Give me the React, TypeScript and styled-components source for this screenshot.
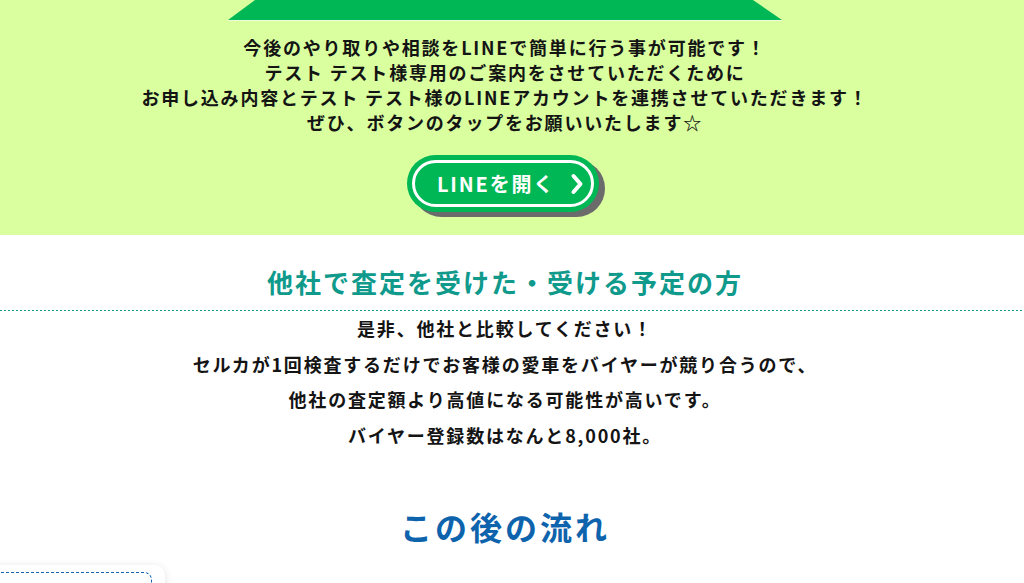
import React from 'react';
import styled, { createGlobalStyle } from 'styled-components';

const GlobalStyle = createGlobalStyle`
  html, body {
    margin: 0;
    padding: 0;
    background: #ffffff;
    overflow: hidden;
  }
  body {
    font-family: 'Noto Sans CJK JP', 'Noto Sans', sans-serif;
    color: #151515;
  }
  * { box-sizing: border-box; }
`;

// Content column is a bit narrower than the window (centered at ~505px)
const GUTTER = 14;

// Styled Components
const Page = styled.div`
  width: 1024px;
  overflow: hidden;
`;

const LineSection = styled.section`
  background: #d9ff9f;
  display: flex;
  flex-direction: column;
  align-items: center;
  padding: 0 ${GUTTER}px 23px 0;
`;

const RibbonWrap = styled.div`
  width: 554px;
  border-bottom: 1px solid #eefbdc;
`;

const Ribbon = styled.div`
  height: 20px;
  background: #00b755;
  clip-path: polygon(27px 0, calc(100% - 29px) 0, 100% 100%, 0 100%);
`;

const Message = styled.p`
  margin: 14px 0 0;
  font-size: 18px;
  font-weight: 700;
  line-height: 25px;
  letter-spacing: 0.1em;
  text-align: center;
  color: #141414;
`;

const ButtonRow = styled.div`
  display: flex;
  justify-content: center;
  width: 100%;
  padding-right: 4px;
  margin-top: 20px;
`;

const LineButton = styled.button`
  width: 192px;
  height: 57px;
  padding: 5px;
  border: none;
  border-radius: 29px;
  background: #00b755;
  box-shadow: 6px 5px 0 #6b6b6b;
  cursor: pointer;
`;

const ButtonInner = styled.span`
  display: flex;
  align-items: center;
  height: 100%;
  padding: 0 6px 0 22px;
  border: 3px solid #ffffff;
  border-radius: 24px;
  color: #ffffff;
  font-family: 'Noto Sans CJK JP', sans-serif;
  font-size: 20px;
  font-weight: 700;
  letter-spacing: 0.09em;
`;

const ButtonLabel = styled.span`
  flex: 1;
  text-align: left;
`;

const CompareSection = styled.section`
  display: flex;
  flex-direction: column;
  align-items: center;
  padding: 29px ${GUTTER}px 0 0;
`;

const SectionTitle = styled.h2<{ $color: string; $size: number; $spacing: number }>`
  margin: 0;
  font-size: ${props => props.$size}px;
  line-height: 1.4;
  font-weight: 700;
  letter-spacing: ${props => props.$spacing}px;
  color: ${props => props.$color};
  text-align: center;
`;

const DottedRule = styled.div`
  align-self: flex-start;
  width: calc(100% + ${GUTTER}px);
  height: 1px;
  margin-top: 10px;
  background-image: repeating-linear-gradient(
    to right,
    #109a8c 0,
    #109a8c 2px,
    transparent 2px,
    transparent 4px
  );
`;

const CompareText = styled.p`
  margin: 0;
  font-size: 18px;
  font-weight: 700;
  line-height: 35.4px;
  letter-spacing: 0.1em;
  text-align: center;
  color: #141414;
`;

const FlowSection = styled.section`
  display: flex;
  flex-direction: column;
  align-items: center;
  margin-top: 51px;
  padding-right: ${GUTTER}px;
`;

const CarouselTrack = styled.div`
  align-self: stretch;
  display: flex;
  margin-top: 16px;
  padding-bottom: 20px;
  transform: translateX(-135px);
`;

const StepCard = styled.div`
  flex: 0 0 300px;
  height: 160px;
  padding: 7px 13px;
  background: #ffffff;
  border-radius: 10px;
  box-shadow: 0 2px 10px rgba(0, 0, 0, 0.12);
`;

const StepInner = styled.div`
  height: 100%;
  border: 1px dashed #1565b0;
  border-radius: 8px;
`;

const Chevron = () => (
  <svg width="16" height="24" viewBox="0 0 16 24" fill="none">
    <path
      d="M4.5 4 L11.5 12 L4.5 20"
      stroke="#ffffff"
      strokeWidth="4"
      strokeLinecap="round"
      strokeLinejoin="round"
    />
  </svg>
);

const App: React.FC = () => {
  return (
    <Page>
      <GlobalStyle />
      <LineSection>
        <RibbonWrap>
          <Ribbon />
        </RibbonWrap>
        <Message>
          今後のやり取りや相談をLINEで簡単に行う事が可能です！
          <br />
          テスト テスト様専用のご案内をさせていただくために
          <br />
          お申し込み内容とテスト テスト様のLINEアカウントを連携させていただきます！
          <br />
          ぜひ、ボタンのタップをお願いいたします☆
        </Message>
        <ButtonRow>
          <LineButton type="button">
            <ButtonInner>
              <ButtonLabel>LINEを開く</ButtonLabel>
              <Chevron />
            </ButtonInner>
          </LineButton>
        </ButtonRow>
      </LineSection>

      <CompareSection>
        <SectionTitle $color="#109a8c" $size={26} $spacing={2}>
          他社で査定を受けた・受ける予定の方
        </SectionTitle>
        <DottedRule />
        <CompareText>
          是非、他社と比較してください！
          <br />
          セルカが1回検査するだけでお客様の愛車をバイヤーが競り合うので、
          <br />
          他社の査定額より高値になる可能性が高いです。
          <br />
          バイヤー登録数はなんと8,000社。
        </CompareText>
      </CompareSection>

      <FlowSection>
        <SectionTitle $color="#0e63ad" $size={32} $spacing={3}>
          この後の流れ
        </SectionTitle>
        <CarouselTrack>
          <StepCard>
            <StepInner />
          </StepCard>
        </CarouselTrack>
      </FlowSection>
    </Page>
  );
};

export default App;
